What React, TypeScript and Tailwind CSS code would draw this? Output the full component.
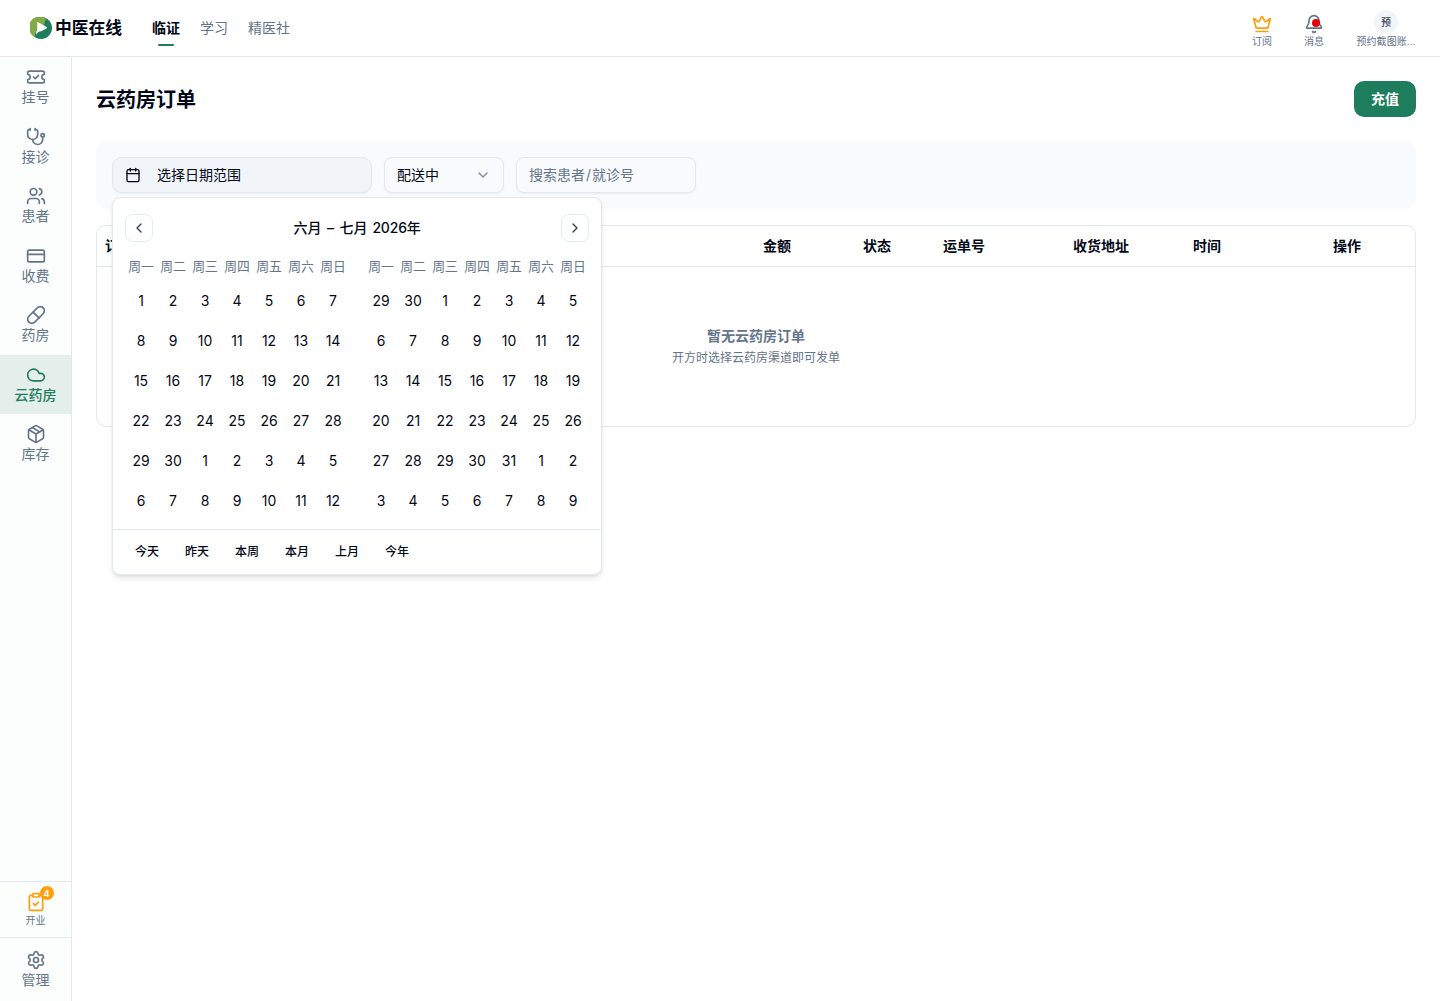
import React from "react";
import {
  Bell,
  Calendar,
  ChevronDown,
  ChevronLeft,
  ChevronRight,
  ClipboardCheck,
  Cloud,
  CreditCard,
  Crown,
  Package,
  Pill,
  Settings,
  Stethoscope,
  TicketCheck,
  Users,
  type LucideIcon,
} from "lucide-react";

const NAV: { label: string; icon: LucideIcon; active?: boolean }[] = [
  { label: "挂号", icon: TicketCheck },
  { label: "接诊", icon: Stethoscope },
  { label: "患者", icon: Users },
  { label: "收费", icon: CreditCard },
  { label: "药房", icon: Pill },
  { label: "云药房", icon: Cloud, active: true },
  { label: "库存", icon: Package },
];

const WEEKDAYS = ["周一", "周二", "周三", "周四", "周五", "周六", "周日"];
const range = (from: number, to: number) =>
  Array.from({ length: to - from + 1 }, (_, i) => from + i);
const JUNE = [...range(1, 30), ...range(1, 12)];
const JULY = [29, 30, ...range(1, 31), ...range(1, 9)];
const PRESETS = ["今天", "昨天", "本周", "本月", "上月", "今年"];
const COLUMNS = ["订单号", "金额", "状态", "运单号", "收货地址", "时间", "操作"];

function Logo() {
  return (
    <svg viewBox="0 0 22 22" className="size-[22px]">
      <circle cx="11" cy="11" r="11" fill="#1d7d5c" />
      <path d="M16 1.2A11 11 0 1 0 5 20.2C5.2 18 5 15.5 6.8 12.5L14 8Z" fill="#82ab47" />
      <path d="M7.2 5.8Q7.3 4.7 8.3 5.2L16.6 10Q17.6 10.7 16.6 11.4L11.2 14.3Q7.6 14.6 6 17.8Q5.8 14.6 7.2 12.6Z" fill="#fff" />
    </svg>
  );
}

function Month({ days }: { days: number[] }) {
  return (
    <div className="w-56">
      <div className="grid grid-cols-7 text-center text-[12.8px] leading-[18px] text-[#64748b]">
        {WEEKDAYS.map((d) => (
          <span key={d} className="whitespace-nowrap">{d}</span>
        ))}
      </div>
      <div className="mt-[9px] grid grid-cols-7 gap-y-2">
        {days.map((d, i) => (
          <button key={i} className="size-8 text-sm">{d}</button>
        ))}
      </div>
    </div>
  );
}

function DatePopover() {
  return (
    <div className="absolute top-10 left-0 z-10 w-[490px] rounded-lg border border-[#e2e8f0] bg-white shadow-md">
      <div className="px-3 pt-4 pb-3">
        <div className="flex h-7 items-center justify-between">
          <button className="flex size-7 items-center justify-center rounded-lg border border-[#e3efeb] text-[#344055]">
            <ChevronLeft className="size-4" />
          </button>
          <span className="flex text-sm font-medium">
            <span>六月</span>
            <span className="w-[18px] text-center">–</span>
            <span>七月</span>
            <span className="ml-[5px] tracking-[-0.2px]">2026年</span>
          </span>
          <button className="flex size-7 items-center justify-center rounded-lg border border-[#e3efeb] text-[#344055]">
            <ChevronRight className="size-4" />
          </button>
        </div>
        <div className="mt-4 flex gap-4">
          <Month days={JUNE} />
          <Month days={JULY} />
        </div>
      </div>
      <div className="flex h-[45px] items-center gap-0.5 border-t border-[#e2e8f0] px-2.5 text-xs font-medium">
        {PRESETS.map((p) => (
          <button key={p} className="h-7 w-12">{p}</button>
        ))}
      </div>
    </div>
  );
}

export default function App() {
  return (
    <div className="flex h-[1001px] flex-col overflow-hidden bg-white font-['Inter','Noto_Sans_CJK_SC',sans-serif] text-sm text-[#020817]">
      <header className="flex h-[57px] shrink-0 items-center border-b border-[#e2e8f0] pr-6 pl-[30px]">
        <div className="flex items-center gap-[3px]">
          <Logo />
          <span className="w-[68px] text-[16.8px] leading-6 font-semibold whitespace-nowrap">中医在线</span>
        </div>
        <nav className="ml-[29px] flex gap-5 text-[#64748b]">
          <span className="relative font-bold text-[#020817]">
            临证
            <i className="absolute -bottom-2 left-1/2 h-0.5 w-4 -translate-x-1/2 rounded-full bg-[#1d7d5c]" />
          </span>
          <span>学习</span>
          <span>精医社</span>
        </nav>
        <div className="ml-auto flex gap-8 pt-px text-[10px] leading-[14px] text-[#64748b]">
          <div className="flex flex-col items-center pt-1">
            <Crown className="size-5 text-[#ff9f0a]" />
            订阅
          </div>
          <div className="flex flex-col items-center pt-1">
            <span className="relative">
              <Bell className="size-5" />
              <i className="absolute top-[5px] left-[8px] size-2 rounded-full bg-[#e7000b]" />
            </span>
            消息
          </div>
          <div className="flex w-[60px] flex-col items-center">
            <span className="flex size-6 items-center justify-center rounded-full bg-[#f1f5f9] text-[10px] font-medium text-[#344055]">预</span>
            <span className="whitespace-nowrap tracking-[0.1px]">预约截图账…</span>
          </div>
        </div>
      </header>

      <div className="flex min-h-0 flex-1">
        <aside className="flex w-[72px] shrink-0 flex-col border-r border-[#e2e8f0] bg-[#fbfefd] leading-[19.5px] text-[#64748b]">
          {NAV.map(({ label, icon: Icon, active }) => (
            <div
              key={label}
              className={
                active
                  ? "flex h-[59.56px] shrink-0 flex-col items-center bg-[#e4eeeb] py-[10px] font-medium text-[#1d7d5c]"
                  : "flex h-[59.56px] shrink-0 flex-col items-center py-[10px]"
              }
            >
              <Icon className="size-5" />
              {label}
            </div>
          ))}
          <div className="mt-auto flex h-14 flex-col items-center border-t border-[#e2e8f0] pt-[10px] text-[10px] leading-[17px]">
            <span className="relative">
              <ClipboardCheck className="size-5 text-[#ff9f0a]" />
              <b className="absolute -top-1.5 -right-2 flex size-3.5 items-center justify-center rounded-full bg-[#ff9f0a] text-[9px] leading-none font-bold text-white">4</b>
            </span>
            开业
          </div>
          <div className="flex h-16 flex-col items-center border-t border-[#e2e8f0] pt-3">
            <Settings className="size-5" />
            管理
          </div>
        </aside>

        <main className="flex min-w-0 flex-1 flex-col p-6">
          <div className="flex h-9 items-center justify-between">
            <h1 className="pt-0.5 text-xl font-semibold">云药房订单</h1>
            <button className="h-9 w-[62px] rounded-[10px] bg-[#1d7d5c] font-bold text-white">充值</button>
          </div>

          <div className="mt-6 flex h-[68px] gap-3 rounded-xl bg-[#f8fafc] p-4">
            <div className="relative w-[260px]">
              <button className="flex h-9 w-full items-center gap-4 rounded-[10px] border border-[#e2e8f0] bg-[#f1f5f9] px-3 shadow-xs">
                <Calendar className="size-4" />
                选择日期范围
              </button>
              <DatePopover />
            </div>
            <button className="flex h-9 w-[120px] items-center justify-between rounded-lg border border-[#e2e8f0] px-3 shadow-xs">
              配送中
              <ChevronDown className="size-4 text-[#7f8b9d]" />
            </button>
            <div className="flex h-9 w-[180px] items-center rounded-lg border border-[#e2e8f0] px-3 text-[#64748b] shadow-xs">
              搜索患者<span className="mx-px">/</span>就诊号
            </div>
          </div>

          <section className="mt-4 h-[202px] rounded-[10px] border border-[#e2e8f0]">
            <div className="grid h-[41px] grid-cols-[658px_100px_80px_130px_120px_140px_90px] items-center border-b border-[#e2e8f0] font-bold">
              {COLUMNS.map((c) => (
                <span key={c} className="px-2">{c}</span>
              ))}
            </div>
            <div className="flex h-[159px] flex-col items-center justify-center text-[#64748b]">
              <p className="font-bold">暂无云药房订单</p>
              <p className="mt-0.5 text-xs leading-5">开方时选择云药房渠道即可发单</p>
            </div>
          </section>
        </main>
      </div>
    </div>
  );
}
